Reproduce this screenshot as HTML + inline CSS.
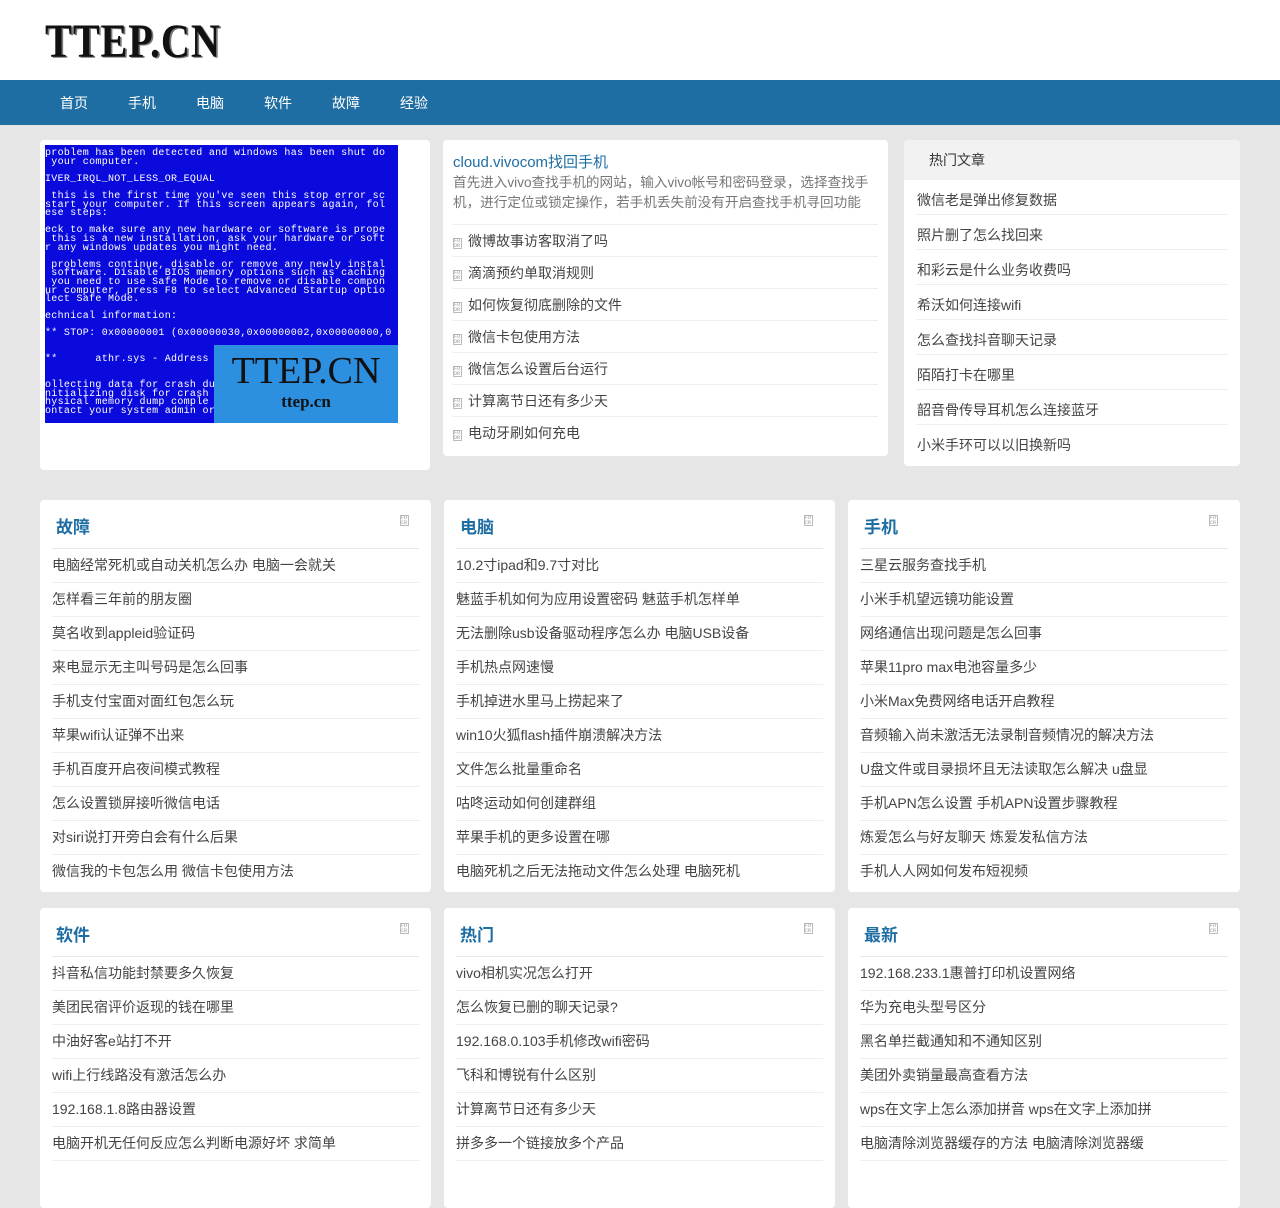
<!DOCTYPE html>
<html><head><meta charset="utf-8"><style>
*{margin:0;padding:0;box-sizing:border-box}
body{width:1280px;height:1167px;overflow:hidden;background:#e6e6e6;font-family:"Liberation Sans","Noto Sans CJK SC",sans-serif;color:#444;font-size:14px;position:relative}
.hd{height:80px;background:#fff;position:relative}
.logo{position:absolute;left:45px;top:14px;font-family:"Liberation Serif",serif;font-size:48px;font-weight:bold;color:#111;transform:scaleX(0.84);transform-origin:left;text-shadow:2px 1px 0 #777;letter-spacing:1px}
.nav{height:45px;background:#1f6ea3;padding-left:60px;padding-top:1px}
.nav a{display:inline-block;color:#fff;font-size:14px;line-height:45px;margin-right:40px}
.box{position:absolute;background:#fff;border-radius:4px}
.img{position:absolute;left:5px;top:5px;width:353px;height:278px;background:#0a0adc;overflow:hidden;font-family:"Liberation Mono",monospace;color:#fff;font-size:10px;line-height:8.6px;white-space:pre;padding:5px 0 0 0;letter-spacing:0.3px}
.wm{position:absolute;right:0;bottom:0;width:184px;height:78px;background:#2d8fe0;color:#111;text-align:center;font-family:"Liberation Serif",serif;letter-spacing:0}
.ic{display:inline-block;width:9px;height:11px;border:1px solid #bbb;font-size:5px;line-height:5px;color:#999;vertical-align:-1px;margin-right:6px;font-family:"Liberation Mono",monospace}
.b2 .t{position:absolute;left:10px;top:11px;color:#1f6ea3;font-size:15px}
.b2 .d{position:absolute;left:10px;top:33px;width:423px;color:#777;font-size:13.6px;line-height:20px;height:40px;overflow:hidden}
.b2 ul{position:absolute;left:10px;top:84px;width:425px;list-style:none;border-top:1px solid #eee}
.b2 li{height:32px;line-height:33px;border-bottom:1px solid #eee;font-size:14px;color:#444}
.b3 .h{height:40px;background:#f2f2f2;line-height:40px;padding-left:25px;font-size:14px;color:#333;border-radius:4px 4px 0 0}
.b3 ul{list-style:none;padding:0 12px}
.b3 li{height:35px;line-height:40px;border-bottom:1px solid #eee;font-size:14px;color:#444;padding-left:1px}
.sec h3{position:absolute;left:16px;top:13px;font-size:17px;color:#1f6ea3;font-weight:bold}
.sec .c{position:absolute;right:16px;top:15px}
.sec ul{position:absolute;left:12px;right:12px;top:48px;list-style:none;border-top:1px solid #e8e8e8}
.sec li{height:34px;line-height:33px;border-bottom:1px solid #eee;font-size:14px;color:#444}
</style></head><body>
<div class="hd"><div class="logo">TTEP.CN</div></div>
<div class="nav"><a>首页</a><a>手机</a><a>电脑</a><a>软件</a><a>故障</a><a>经验</a></div>

<div class="box" style="left:40px;top:140px;width:390px;height:330px">
<div class="img">problem has been detected and windows has been shut do
 your computer.

IVER_IRQL_NOT_LESS_OR_EQUAL

 this is the first time you've seen this stop error sc
start your computer. If this screen appears again, fol
ese steps:

eck to make sure any new hardware or software is prope
 this is a new installation, ask your hardware or soft
r any windows updates you might need.

 problems continue, disable or remove any newly instal
 software. Disable BIOS memory options such as caching
 you need to use Safe Mode to remove or disable compon
ur computer, press F8 to select Advanced Startup optio
lect Safe Mode.

echnical information:

** STOP: 0x00000001 (0x00000030,0x00000002,0x00000000,0


**      athr.sys - Address


ollecting data for crash du
nitializing disk for crash
hysical memory dump comple
ontact your system admin or<div class="wm"><div style="font-size:38px;line-height:44px;margin-top:4px">TTEP.CN</div><div style="font-size:17px;font-weight:bold;line-height:18px">ttep.cn</div></div></div>
</div>

<div class="box b2" style="left:443px;top:140px;width:445px;height:316px">
<div class="t">cloud.vivocom找回手机</div>
<div class="d">首先进入vivo查找手机的网站，输入vivo帐号和密码登录，选择查找手机，进行定位或锁定操作，若手机丢失前没有开启查找手机寻回功能</div>
<ul><li><span class="ic">FO DR</span>微博故事访客取消了吗</li><li><span class="ic">FO DR</span>滴滴预约单取消规则</li><li><span class="ic">FO DR</span>如何恢复彻底删除的文件</li><li><span class="ic">FO DR</span>微信卡包使用方法</li><li><span class="ic">FO DR</span>微信怎么设置后台运行</li><li><span class="ic">FO DR</span>计算离节日还有多少天</li><li style="border:0"><span class="ic">FO DR</span>电动牙刷如何充电</li></ul>
</div>

<div class="box b3" style="left:904px;top:140px;width:336px;height:326px">
<div class="h">热门文章</div>
<ul><li>微信老是弹出修复数据</li><li>照片删了怎么找回来</li><li>和彩云是什么业务收费吗</li><li>希沃如何连接wifi</li><li>怎么查找抖音聊天记录</li><li>陌陌打卡在哪里</li><li>韶音骨传导耳机怎么连接蓝牙</li><li style="border:0">小米手环可以以旧换新吗</li></ul>
</div>

<div class="box sec" style="left:40px;top:500px;width:391px;height:392px"><h3>故障</h3><span class="ic c">FO CR</span><ul>
<li>电脑经常死机或自动关机怎么办 电脑一会就关</li><li>怎样看三年前的朋友圈</li><li>莫名收到appleid验证码</li><li>来电显示无主叫号码是怎么回事</li><li>手机支付宝面对面红包怎么玩</li><li>苹果wifi认证弹不出来</li><li>手机百度开启夜间模式教程</li><li>怎么设置锁屏接听微信电话</li><li>对siri说打开旁白会有什么后果</li><li style="border:0">微信我的卡包怎么用 微信卡包使用方法</li></ul></div>
<div class="box sec" style="left:444px;top:500px;width:391px;height:392px"><h3>电脑</h3><span class="ic c">FO CR</span><ul>
<li>10.2寸ipad和9.7寸对比</li><li>魅蓝手机如何为应用设置密码 魅蓝手机怎样单</li><li>无法删除usb设备驱动程序怎么办 电脑USB设备</li><li>手机热点网速慢</li><li>手机掉进水里马上捞起来了</li><li>win10火狐flash插件崩溃解决方法</li><li>文件怎么批量重命名</li><li>咕咚运动如何创建群组</li><li>苹果手机的更多设置在哪</li><li style="border:0">电脑死机之后无法拖动文件怎么处理 电脑死机</li></ul></div>
<div class="box sec" style="left:848px;top:500px;width:392px;height:392px"><h3>手机</h3><span class="ic c">FO CR</span><ul>
<li>三星云服务查找手机</li><li>小米手机望远镜功能设置</li><li>网络通信出现问题是怎么回事</li><li>苹果11pro max电池容量多少</li><li>小米Max免费网络电话开启教程</li><li>音频输入尚未激活无法录制音频情况的解决方法</li><li>U盘文件或目录损坏且无法读取怎么解决 u盘显</li><li>手机APN怎么设置 手机APN设置步骤教程</li><li>炼爱怎么与好友聊天 炼爱发私信方法</li><li style="border:0">手机人人网如何发布短视频</li></ul></div>

<div class="box sec" style="left:40px;top:908px;width:391px;height:300px"><h3>软件</h3><span class="ic c">FO CR</span><ul>
<li>抖音私信功能封禁要多久恢复</li><li>美团民宿评价返现的钱在哪里</li><li>中油好客e站打不开</li><li>wifi上行线路没有激活怎么办</li><li>192.168.1.8路由器设置</li><li>电脑开机无任何反应怎么判断电源好坏 求简单</li></ul></div>
<div class="box sec" style="left:444px;top:908px;width:391px;height:300px"><h3>热门</h3><span class="ic c">FO CR</span><ul>
<li>vivo相机实况怎么打开</li><li>怎么恢复已删的聊天记录?</li><li>192.168.0.103手机修改wifi密码</li><li>飞科和博锐有什么区别</li><li>计算离节日还有多少天</li><li>拼多多一个链接放多个产品</li></ul></div>
<div class="box sec" style="left:848px;top:908px;width:392px;height:300px"><h3>最新</h3><span class="ic c">FO CR</span><ul>
<li>192.168.233.1惠普打印机设置网络</li><li>华为充电头型号区分</li><li>黑名单拦截通知和不通知区别</li><li>美团外卖销量最高查看方法</li><li>wps在文字上怎么添加拼音 wps在文字上添加拼</li><li>电脑清除浏览器缓存的方法 电脑清除浏览器缓</li></ul></div>
</body></html>
